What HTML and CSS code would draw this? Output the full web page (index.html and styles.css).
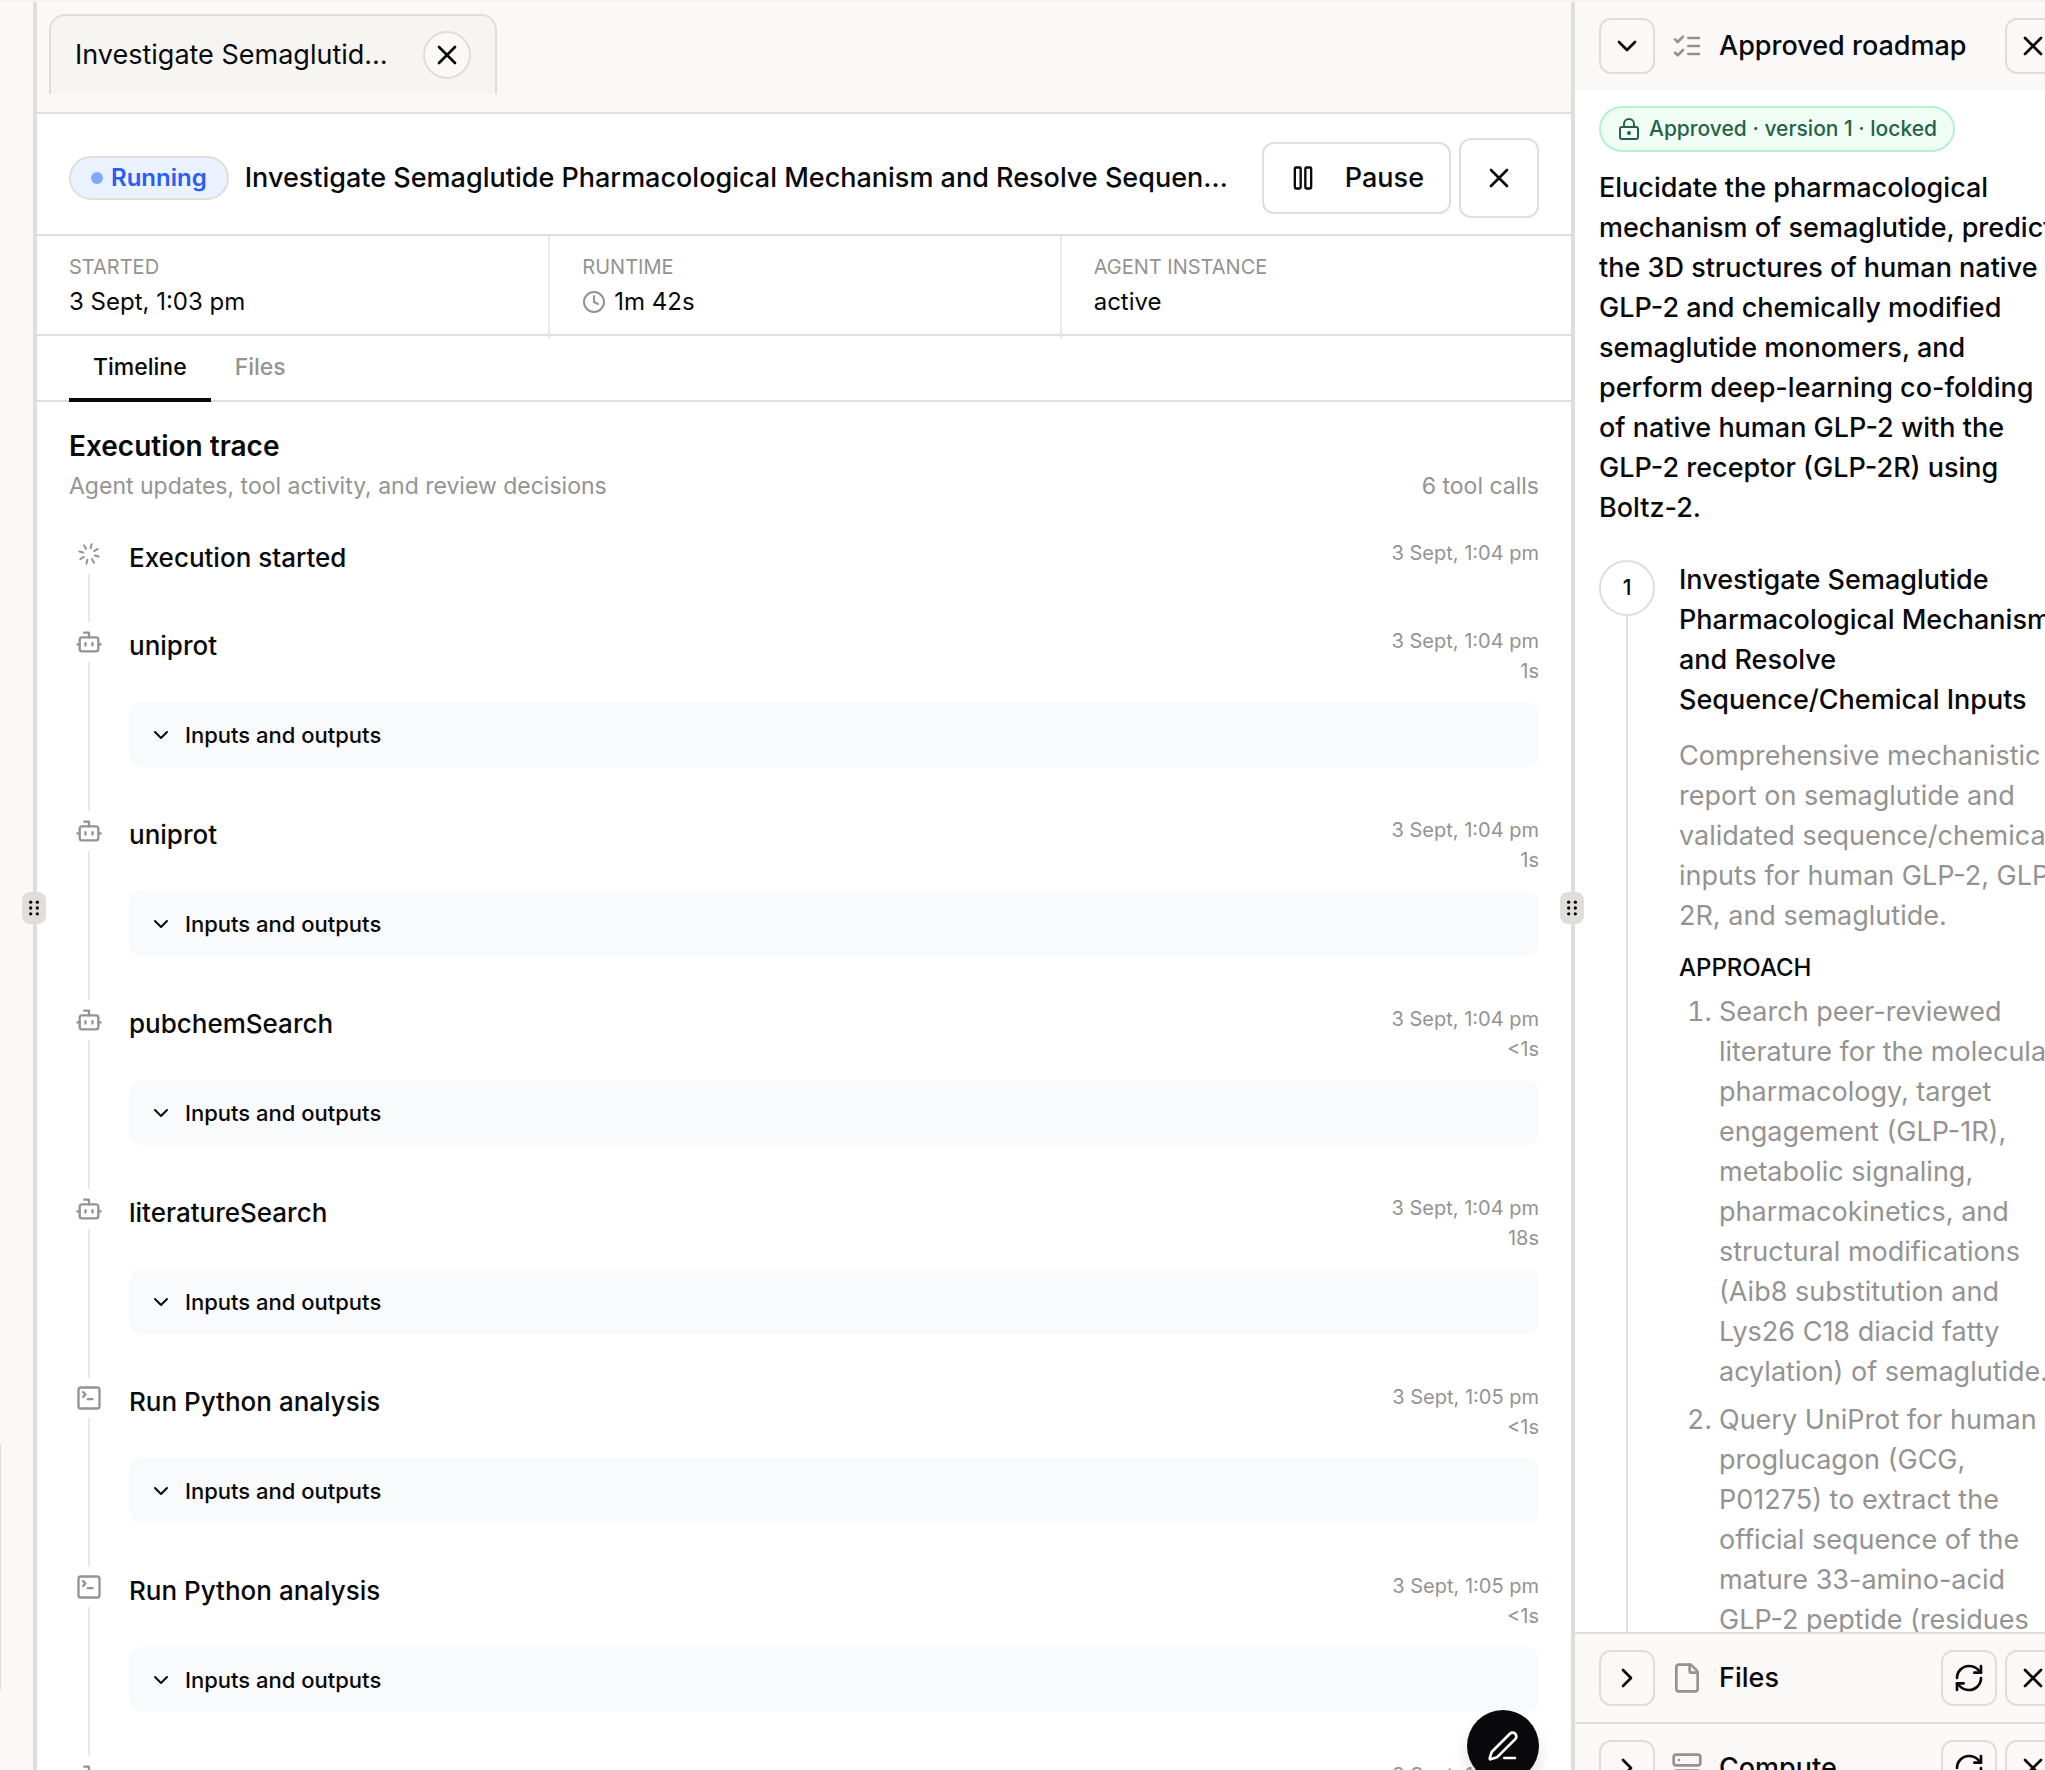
FILE: index.html
```html
<!DOCTYPE html>
<html lang="en">
<head>
<meta charset="utf-8">
<title>Agent run</title>
<link rel="stylesheet" href="styles.css">
</head>
<body>
<svg class="sprite" aria-hidden="true">
  <symbol id="x" viewBox="0 0 24 24"><path d="M18 6 6 18M6 6l12 12"/></symbol>
  <symbol id="down" viewBox="0 0 24 24"><path d="m6 9 6 6 6-6"/></symbol>
  <symbol id="right" viewBox="0 0 24 24"><path d="m9 18 6-6-6-6"/></symbol>
  <symbol id="pause" viewBox="0 0 24 24"><rect x="14" y="3" width="5" height="18" rx="1"/><rect x="5" y="3" width="5" height="18" rx="1"/></symbol>
  <symbol id="clock" viewBox="0 0 24 24"><circle cx="12" cy="12" r="10"/><path d="M12 6v6l4 2"/></symbol>
  <symbol id="loader" viewBox="0 0 24 24"><g transform="rotate(15 12 12)"><path d="M12 2v4M16.2 7.8l2.9-2.9M18 12h4M16.2 16.2l2.9 2.9M12 18v4M4.9 19.1l2.9-2.9M2 12h4M4.9 4.9l2.9 2.9"/></g></symbol>
  <symbol id="bot" viewBox="0 0 24 24"><path d="M12 8V4H8"/><rect x="4" y="8" width="16" height="12" rx="2"/><path d="M2 14h2M20 14h2M15 13v2M9 13v2"/></symbol>
  <symbol id="terminal" viewBox="0 0 24 24"><path d="m7 11 2-2-2-2M11 13h4"/><rect x="3" y="3" width="18" height="18" rx="2"/></symbol>
  <symbol id="checks" viewBox="0 0 24 24"><path d="m3 17 2 2 4-4M3 7l2 2 4-4M13 6h8M13 12h8M13 18h8"/></symbol>
  <symbol id="lock" viewBox="0 0 24 24"><circle cx="12" cy="16" r="1"/><rect x="3" y="10" width="18" height="12" rx="2"/><path d="M7 10V7a5 5 0 0 1 10 0v3"/></symbol>
  <symbol id="file" viewBox="0 0 24 24"><path d="M6 22a2 2 0 0 1-2-2V4a2 2 0 0 1 2-2h8a2.4 2.4 0 0 1 1.704.706l3.588 3.588A2.4 2.4 0 0 1 20 8v12a2 2 0 0 1-2 2z"/><path d="M14 2v5a1 1 0 0 0 1 1h5"/></symbol>
  <symbol id="server" viewBox="0 0 24 24"><rect x="2" y="2" width="20" height="8" rx="2"/><rect x="2" y="14" width="20" height="8" rx="2"/><path d="M6 6h.01M6 18h.01"/></symbol>
  <symbol id="refresh" viewBox="0 0 24 24"><path d="M3 12a9 9 0 0 1 9-9 9.75 9.75 0 0 1 6.74 2.74L21 8"/><path d="M21 3v5h-5M21 12a9 9 0 0 1-9 9 9.75 9.75 0 0 1-6.74-2.74L3 16"/><path d="M8 16H3v5"/></symbol>
  <symbol id="pen" viewBox="0 0 24 24"><path d="M13 21h8"/><path d="M21.174 6.812a1 1 0 0 0-3.986-3.987L3.842 16.174a2 2 0 0 0-.5.83l-1.321 4.352a.5.5 0 0 0 .623.622l4.353-1.32a2 2 0 0 0 .83-.497z"/></symbol>
  <symbol id="grip" viewBox="0 0 24 24"><circle cx="8" cy="5" r="2"/><circle cx="8" cy="12" r="2"/><circle cx="8" cy="19" r="2"/><circle cx="16" cy="5" r="2"/><circle cx="16" cy="12" r="2"/><circle cx="16" cy="19" r="2"/></symbol>
</svg>

<div class="app">
  <aside class="gutter"><div class="gutter-card"></div></aside>
  <div class="divider"><span class="grip"><svg class="icon grip-icon"><use href="#grip"/></svg></span></div>

  <main class="main">
    <div class="tabbar">
      <div class="doc-tab">
        <span class="doc-tab-title">Investigate Semaglutide Pharmacological</span>
        <button class="round-btn" aria-label="Close tab"><svg class="icon icon-lg"><use href="#x"/></svg></button>
      </div>
    </div>

    <header class="run-head">
      <span class="status"><i class="dot"></i>Running</span>
      <h1 class="run-title">Investigate Semaglutide Pharmacological Mechanism and Resolve Sequence/Chemical Inputs</h1>
      <div class="run-actions">
        <button class="pause-btn"><svg class="icon icon-md"><use href="#pause"/></svg>Pause</button>
        <button class="close-btn" aria-label="Close run"><svg class="icon icon-lg"><use href="#x"/></svg></button>
      </div>
    </header>

    <dl class="stats">
      <div class="stat"><dt>STARTED</dt><dd>3 Sept, 1:03 pm</dd></div>
      <div class="stat"><dt>RUNTIME</dt><dd><svg class="icon icon-sm muted"><use href="#clock"/></svg>1m 42s</dd></div>
      <div class="stat"><dt>AGENT INSTANCE</dt><dd>active</dd></div>
    </dl>

    <nav class="tabs">
      <button class="tab tab-active">Timeline</button>
      <button class="tab">Files</button>
    </nav>

    <section class="trace">
      <div class="trace-head">
        <div>
          <h2>Execution trace</h2>
          <p>Agent updates, tool activity, and review decisions</p>
        </div>
        <p>6 tool calls</p>
      </div>
      <ol class="timeline">
        <li class="event">
          <div class="rail"><svg class="icon icon-sm"><use href="#loader"/></svg></div>
          <div class="event-body">
            <div class="event-head"><h3>Execution started</h3><div class="when"><time>3 Sept, 1:04 pm</time></div></div>
          </div>
        </li>
        <li class="event">
          <div class="rail"><svg class="icon icon-md"><use href="#bot"/></svg></div>
          <div class="event-body">
            <div class="event-head"><h3>uniprot</h3><div class="when"><time>3 Sept, 1:04 pm</time><span>1s</span></div></div>
            <button class="io"><svg class="icon icon-sm"><use href="#down"/></svg>Inputs and outputs</button>
          </div>
        </li>
        <li class="event">
          <div class="rail"><svg class="icon icon-md"><use href="#bot"/></svg></div>
          <div class="event-body">
            <div class="event-head"><h3>uniprot</h3><div class="when"><time>3 Sept, 1:04 pm</time><span>1s</span></div></div>
            <button class="io"><svg class="icon icon-sm"><use href="#down"/></svg>Inputs and outputs</button>
          </div>
        </li>
        <li class="event">
          <div class="rail"><svg class="icon icon-md"><use href="#bot"/></svg></div>
          <div class="event-body">
            <div class="event-head"><h3>pubchemSearch</h3><div class="when"><time>3 Sept, 1:04 pm</time><span>&lt;1s</span></div></div>
            <button class="io"><svg class="icon icon-sm"><use href="#down"/></svg>Inputs and outputs</button>
          </div>
        </li>
        <li class="event">
          <div class="rail"><svg class="icon icon-md"><use href="#bot"/></svg></div>
          <div class="event-body">
            <div class="event-head"><h3>literatureSearch</h3><div class="when"><time>3 Sept, 1:04 pm</time><span>18s</span></div></div>
            <button class="io"><svg class="icon icon-sm"><use href="#down"/></svg>Inputs and outputs</button>
          </div>
        </li>
        <li class="event">
          <div class="rail"><svg class="icon icon-md"><use href="#terminal"/></svg></div>
          <div class="event-body">
            <div class="event-head"><h3>Run Python analysis</h3><div class="when"><time>3 Sept, 1:05 pm</time><span>&lt;1s</span></div></div>
            <button class="io"><svg class="icon icon-sm"><use href="#down"/></svg>Inputs and outputs</button>
          </div>
        </li>
        <li class="event">
          <div class="rail"><svg class="icon icon-md"><use href="#terminal"/></svg></div>
          <div class="event-body">
            <div class="event-head"><h3>Run Python analysis</h3><div class="when"><time>3 Sept, 1:05 pm</time><span>&lt;1s</span></div></div>
            <button class="io"><svg class="icon icon-sm"><use href="#down"/></svg>Inputs and outputs</button>
          </div>
        </li>
        <li class="event">
          <div class="rail"><svg class="icon icon-md"><use href="#bot"/></svg></div>
          <div class="event-body">
            <div class="event-head"><h3></h3><div class="when"><time>3 Sept, 1:05 pm</time></div></div>
          </div>
        </li>
      </ol>
    </section>
    <button class="fab" aria-label="Write a message"><svg class="icon icon-lg"><use href="#pen"/></svg></button>
  </main>

  <div class="divider"><span class="grip"><svg class="icon grip-icon"><use href="#grip"/></svg></span></div>

  <aside class="side">
    <section class="panel panel-open">
      <header class="panel-head">
        <button class="sq-btn" aria-label="Collapse roadmap"><svg class="icon icon-lg"><use href="#down"/></svg></button>
        <h2><svg class="icon icon-lg muted"><use href="#checks"/></svg>Approved roadmap</h2>
        <button class="sq-btn" aria-label="Close roadmap"><svg class="icon icon-lg"><use href="#x"/></svg></button>
      </header>
      <div class="roadmap">
        <span class="approved"><svg class="icon icon-sm"><use href="#lock"/></svg>Approved · version 1 · locked</span>
        <p class="goal">Elucidate the pharmacological mechanism of semaglutide, predict the 3D structures of human native GLP-2 and chemically modified semaglutide monomers, and perform deep-learning co-folding of native human GLP-2 with the GLP-2 receptor (GLP-2R) using Boltz-2.</p>
        <div class="step">
          <div class="step-rail"><span class="step-num">1</span></div>
          <div class="step-body">
            <h3>Investigate Semaglutide Pharmacological Mechanism and Resolve Sequence/Chemical Inputs</h3>
            <p>Comprehensive mechanistic report on semaglutide and validated sequence/chemical inputs for human GLP-2, GLP-2R, and semaglutide.</p>
            <h4>APPROACH</h4>
            <ol>
              <li>Search peer-reviewed literature for the molecular pharmacology, target engagement (GLP-1R), metabolic signaling, pharmacokinetics, and structural modifications (Aib8 substitution and Lys26 C18 diacid fatty acylation) of semaglutide.</li>
              <li>Query UniProt for human proglucagon (GCG, P01275) to extract the official sequence of the mature 33-amino-acid GLP-2 peptide (residues</li>
            </ol>
          </div>
        </div>
      </div>
    </section>
    <section class="panel">
      <header class="panel-head">
        <button class="sq-btn" aria-label="Expand files"><svg class="icon icon-lg"><use href="#right"/></svg></button>
        <h2><svg class="icon icon-lg muted"><use href="#file"/></svg>Files</h2>
        <button class="sq-btn" aria-label="Refresh files"><svg class="icon icon-lg"><use href="#refresh"/></svg></button>
        <button class="sq-btn" aria-label="Close files"><svg class="icon icon-lg"><use href="#x"/></svg></button>
      </header>
    </section>
    <section class="panel">
      <header class="panel-head">
        <button class="sq-btn" aria-label="Expand compute"><svg class="icon icon-lg"><use href="#right"/></svg></button>
        <h2><svg class="icon icon-lg muted"><use href="#server"/></svg>Compute</h2>
        <button class="sq-btn" aria-label="Refresh compute"><svg class="icon icon-lg"><use href="#refresh"/></svg></button>
        <button class="sq-btn" aria-label="Close compute"><svg class="icon icon-lg"><use href="#x"/></svg></button>
      </header>
    </section>
  </aside>
</div>
</body>
</html>
```
FILE: styles.css
```css
:root {
  --ink: #09090b;
  --muted: #949392;
  --line: #dfdedd;
  --line-soft: #e8e8e8;
  --paper: #faf9f7;
}
* { box-sizing: border-box; margin: 0; padding: 0; }
html, body { overflow: hidden; height: 100%; }
body {
  font-family: Inter, "Liberation Sans", sans-serif;
  font-size: 27px;
  line-height: 40px;
  color: var(--ink);
  background: #fff;
}
h1, h2, h3, h4 { font-size: inherit; font-weight: 500; }
button { font: inherit; color: inherit; background: none; border: 0; }
.sprite { position: absolute; width: 0; height: 0; }
.icon {
  flex: none;
  width: 32px;
  height: 32px;
  fill: none;
  stroke: currentColor;
  stroke-width: 2;
  stroke-linecap: round;
  stroke-linejoin: round;
}
.icon-md { width: 28px; height: 28px; }
.icon-sm { width: 24px; height: 24px; }
.muted { color: var(--muted); }

/* The workspace runs a little past the window on the right and bottom. */
.app {
  display: grid;
  grid-template-columns: 33px 4px minmax(0, 1fr) 4px 510px;
  grid-template-rows: minmax(0, 1fr);
  width: calc(100% + 40px);
  height: calc(100% + 44px);
  border-top: 2px solid #f4f3f1;
}
.gutter { background: var(--paper); display: flex; align-items: flex-end; }
.gutter-card {
  width: 1px;
  height: 246px;
  margin-bottom: 124px;
  background: var(--line);
}
.divider { position: relative; background: var(--line); z-index: 1; }
.grip {
  position: absolute;
  top: 50%;
  left: 50%;
  width: 24px;
  height: 32px;
  margin: -16px -13px;
  display: flex;
  align-items: center;
  justify-content: center;
  border-radius: 8px;
  background: var(--line);
}
.grip-icon { width: 20px; height: 20px; fill: currentColor; stroke: none; }

.main { position: relative; display: flex; flex-direction: column; min-width: 0; overflow: hidden; }
.tabbar {
  flex: none;
  height: 112px;
  padding: 12px;
  background: var(--paper);
  border-bottom: 2px solid var(--line);
}
.doc-tab {
  display: flex;
  align-items: center;
  gap: 28px;
  width: 448px;
  height: 80px;
  padding: 0 24px;
  background: #f6f5f2;
  border: 2px solid var(--line);
  border-bottom: 0;
  border-radius: 16px 16px 0 0;
}
.doc-tab-title, .run-title { flex: 1; min-width: 0; overflow: hidden; white-space: nowrap; text-overflow: ellipsis; }
.round-btn {
  display: flex;
  align-items: center;
  justify-content: center;
  width: 48px;
  height: 48px;
  border: 2px solid var(--line);
  border-radius: 50%;
  background: var(--paper);
}
.run-head {
  flex: none;
  display: flex;
  align-items: center;
  height: 122px;
  padding: 8px 32px 0;
  gap: 16px;
  border-bottom: 2px solid var(--line);
}
.status {
  display: flex;
  align-items: center;
  gap: 8px;
  height: 44px;
  padding: 0 20px;
  border: 2px solid var(--line);
  border-radius: 22px;
  background: #ebf2ff;
  color: #2b5cf6;
  font-size: 24px;
  font-weight: 600;
}
.dot { width: 12px; height: 12px; border-radius: 50%; background: #80a8ff; }
.run-actions { display: flex; align-items: center; gap: 8px; padding-left: 8px; }
.pause-btn, .close-btn, .sq-btn {
  display: flex;
  align-items: center;
  justify-content: center;
  border: 2px solid var(--line);
  border-radius: 12px;
}
.pause-btn { height: 72px; padding: 0 25px; gap: 28px; font-weight: 500; }
.close-btn { width: 80px; height: 80px; }

.stats {
  flex: none;
  display: grid;
  grid-template-columns: repeat(3, 1fr);
  height: 100px;
  border-bottom: 2px solid var(--line);
}
.stat { padding: 16px 32px; border-left: 2px solid var(--line-soft); }
.stat:first-child { border-left: 0; }
.stat dt { font-size: 20px; line-height: 30px; color: var(--muted); }
.stat dd { display: flex; align-items: center; gap: 8px; font-size: 24px; }

.tabs {
  flex: none;
  display: flex;
  height: 66px;
  padding: 0 32px;
  border-bottom: 2px solid var(--line);
}
.tab {
  height: 66px;
  padding: 0 24px;
  font-size: 23px;
  font-weight: 500;
  color: var(--muted);
  border-bottom: 4px solid transparent;
}
.tab-active { color: var(--ink); border-color: var(--ink); }

.trace { flex: 1; min-height: 0; padding: 24px 32px; overflow: hidden; }
.trace-head { display: flex; justify-content: space-between; align-items: flex-end; }
.trace-head h2 { font-size: 28px; font-weight: 600; }
.trace-head p { font-size: 23px; color: var(--muted); }
.timeline { list-style: none; padding-top: 28px; }
.event { display: flex; gap: 20px; }
.rail {
  flex: none;
  width: 40px;
  display: flex;
  flex-direction: column;
  align-items: center;
  color: var(--muted);
}
.rail .icon { margin: 6px 0; }
.rail .icon-sm { margin: 8px 0; }
.rail::after { content: ""; flex: 1; width: 2px; background: var(--line-soft); }
.event-body { flex: 1; padding: 4px 0 44px; }
.event-head { display: flex; justify-content: space-between; align-items: flex-start; }
.event-head h3 { font-size: 26px; }
.when {
  display: flex;
  flex-direction: column;
  align-items: flex-end;
  font-size: 20px;
  line-height: 30px;
  color: var(--muted);
}
.io {
  display: flex;
  align-items: center;
  gap: 12px;
  width: 100%;
  height: 65px;
  margin-top: 16px;
  padding: 0 20px;
  border-radius: 12px;
  background: #f9fafc;
  font-size: 22px;
  font-weight: 500;
}
.fab {
  position: absolute;
  right: 32px;
  bottom: 32px;
  display: flex;
  align-items: center;
  justify-content: center;
  width: 72px;
  height: 72px;
  border-radius: 50%;
  background: var(--ink);
  color: #fff;
  box-shadow: 0 8px 16px rgba(0, 0, 0, .12);
}

.side { display: flex; flex-direction: column; min-width: 0; }
.panel { flex: none; border-bottom: 2px solid var(--line); }
.panel-open { flex: 1; min-height: 0; display: flex; flex-direction: column; }
.panel-head {
  flex: none;
  display: flex;
  align-items: center;
  gap: 8px;
  height: 88px;
  padding: 0 24px;
  background: var(--paper);
}
.panel-head h2 { flex: 1; display: flex; align-items: center; gap: 16px; padding-left: 8px; }
.sq-btn { flex: none; width: 56px; height: 56px; }
.roadmap { flex: 1; min-height: 0; overflow: hidden; padding: 16px 24px; }
.approved {
  display: flex;
  align-items: center;
  gap: 8px;
  width: fit-content;
  height: 46px;
  padding: 0 16px;
  border: 2px solid #b4f2d0;
  border-radius: 23px;
  background: #effdf4;
  color: #24634a;
  font-size: 21px;
  font-weight: 500;
}
.goal { margin-top: 16px; font-weight: 500; }
.step { display: flex; gap: 24px; margin-top: 32px; }
.step-rail { display: flex; flex-direction: column; align-items: center; }
.step-rail::after { content: ""; flex: 1; width: 2px; background: var(--line); }
.step-num {
  display: flex;
  align-items: center;
  justify-content: center;
  width: 56px;
  height: 56px;
  border: 2px solid var(--line);
  border-radius: 50%;
  font-size: 21px;
  font-weight: 500;
}
.step-body { flex: 1; min-width: 0; color: var(--muted); }
.step-body h3 { color: var(--ink); margin-bottom: 16px; }
.step-body h4 { color: var(--ink); margin-top: 12px; font-size: 24px; }
.step-body ol { padding-left: 40px; margin-top: 4px; }
.step-body li { margin-bottom: 8px; }
```
